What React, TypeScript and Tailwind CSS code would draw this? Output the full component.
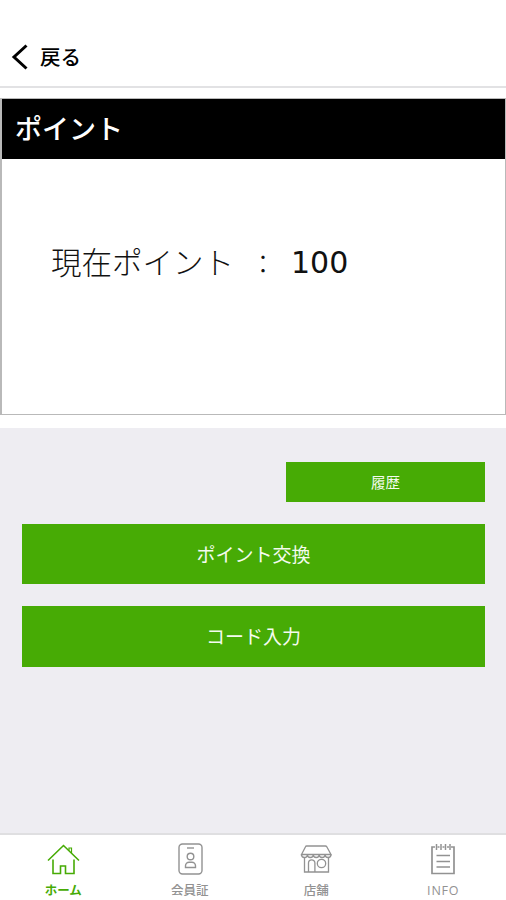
import type { ReactNode } from 'react'

const GREEN = '#47ab05'
const GRAY = '#929292'

const TABS: { id: string; label: string; icon: ReactNode; labelClass: string }[] = [
  { id: 'home', label: 'ホーム', icon: <HomeIcon />, labelClass: 'text-[12.5px] font-bold' },
  { id: 'card', label: '会員証', icon: <MemberIcon />, labelClass: 'text-[12.5px] font-medium' },
  { id: 'shop', label: '店舗', icon: <ShopIcon />, labelClass: 'text-[12.5px] font-medium' },
  {
    id: 'info',
    label: 'INFO',
    icon: <InfoIcon />,
    labelClass: "font-['Open_Sans',sans-serif] text-[12.5px] tracking-[0.8px] pl-px pt-px",
  },
]

export default function App() {
  return (
    <div className="flex h-[900px] w-[506px] flex-col overflow-hidden bg-white font-['Noto_Sans_CJK_JP',sans-serif] text-black">
      <header className="flex h-[88px] shrink-0 items-end border-b-2 border-[#e2e2e4] pb-[15px] pl-[11px]">
        <button className="flex items-center">
          <svg width="18" height="28" viewBox="0 0 18 28" fill="none" stroke="#000" strokeWidth="3">
            <path d="M15.5 2.5 3 14l12.5 11.5" />
          </svg>
          <span className="ml-[11px] pb-px text-[20.5px] font-medium leading-[27px]">戻る</span>
        </button>
      </header>

      <section className="mt-[10px] h-[317px] shrink-0 border border-l-2 border-[#b9b9b9]">
        <h1 className="flex h-[60px] items-center bg-black pb-[4px] pl-[13px] text-[27px] font-medium leading-none text-white">
          ポイント
        </h1>
        <div className="flex h-[207px] items-center pl-[49px] text-[30.5px] font-light leading-none text-[#111]">
          <span className="pb-[3px]">現在ポイント</span>
          <span className="ml-[16px] w-[26px] text-center text-[26px]">：</span>
          <span className="ml-[15px] pt-px font-['DejaVu_Sans',sans-serif] text-[30px] font-normal">100</span>
        </div>
      </section>

      <main className="mt-[13px] flex flex-1 flex-col bg-[#eeedf2] pl-[22px] pr-[21px] pt-[34px] text-[#f4fbef]">
        <button className="h-10 w-[199px] self-end bg-[#47ab05] pb-px text-[14.5px]">履歴</button>
        <button className="mt-[22px] h-[60px] bg-[#47ab05] text-[19px]">ポイント交換</button>
        <button className="mt-[22px] h-[61px] bg-[#47ab05] text-[19px]">コード入力</button>
      </main>

      <nav className="grid h-[67px] shrink-0 grid-cols-4 border-t-2 border-[#dfdfe1] bg-white">
        {TABS.map((t) => (
          <button
            key={t.id}
            className="flex flex-col items-center pt-[7px]"
            style={{ color: t.id === 'home' ? GREEN : GRAY }}
          >
            {t.icon}
            <span className={`mt-[6px] leading-4 ${t.labelClass}`}>{t.label}</span>
          </button>
        ))}
      </nav>
    </div>
  )
}

function HomeIcon() {
  return (
    <svg width="34" height="34" viewBox="0 0 34 34" fill="none" stroke="currentColor" strokeWidth="1.6">
      <path d="M2 18.500 17.500 3.500 33 18.500" />
      <path d="M23 8.500V6h2.500v5" strokeWidth="1.2" />
      <path d="M7 17.500v14h7.500V24h5v7.500H28v-14" />
    </svg>
  )
}

function MemberIcon() {
  return (
    <svg width="34" height="34" viewBox="0 0 34 34" fill="none" stroke="currentColor" strokeWidth="1.4">
      <rect x="6" y="2" width="23" height="30" rx="3.500" />
      <path d="M14 6h7" />
      <circle cx="17.500" cy="14.500" r="3.300" />
      <path d="M12.500 25.500v-1.700c0-2 1.600-3.600 3.600-3.600h2.800c2 0 3.600 1.600 3.600 3.600v1.700z" />
    </svg>
  )
}

function ShopIcon() {
  return (
    <svg width="34" height="34" viewBox="0 0 34 34" fill="none" stroke="currentColor" strokeWidth="1.300">
      <path d="M7.500 4h19c.6 0 1 .3 1.300.8L32 12.500H2.500L6.500 4.800c.2-.5.500-.8 1-.8z" />
      <path d="M2.500 12.500c0 4 5.900 4 5.900 0 0 4 5.900 4 5.900 0 0 4 5.900 4 5.900 0 0 4 5.900 4 5.900 0 0 4 5.900 4 5.900 0" />
      <path d="M5.500 15.500V30h24V15.500" />
      <path d="M9.500 30v-9a3.200 3.200 0 0 1 6.400 0v9" />
      <circle cx="22.500" cy="21.500" r="4.200" />
    </svg>
  )
}

function InfoIcon() {
  return (
    <svg width="34" height="34" viewBox="0 0 34 34" fill="none" stroke="currentColor" strokeWidth="1.700">
      <path d="M9 5H6v26.500h22V5h-3M11.500 5h2M16.500 5h2M21 5h2" />
      <path d="M10.500 2v6M15 2v6M19.500 2v6M24 2v6" strokeWidth="1.500" />
      <path d="M10.500 13.500H24M10.500 19.500H24M10.500 25H24" />
    </svg>
  )
}
